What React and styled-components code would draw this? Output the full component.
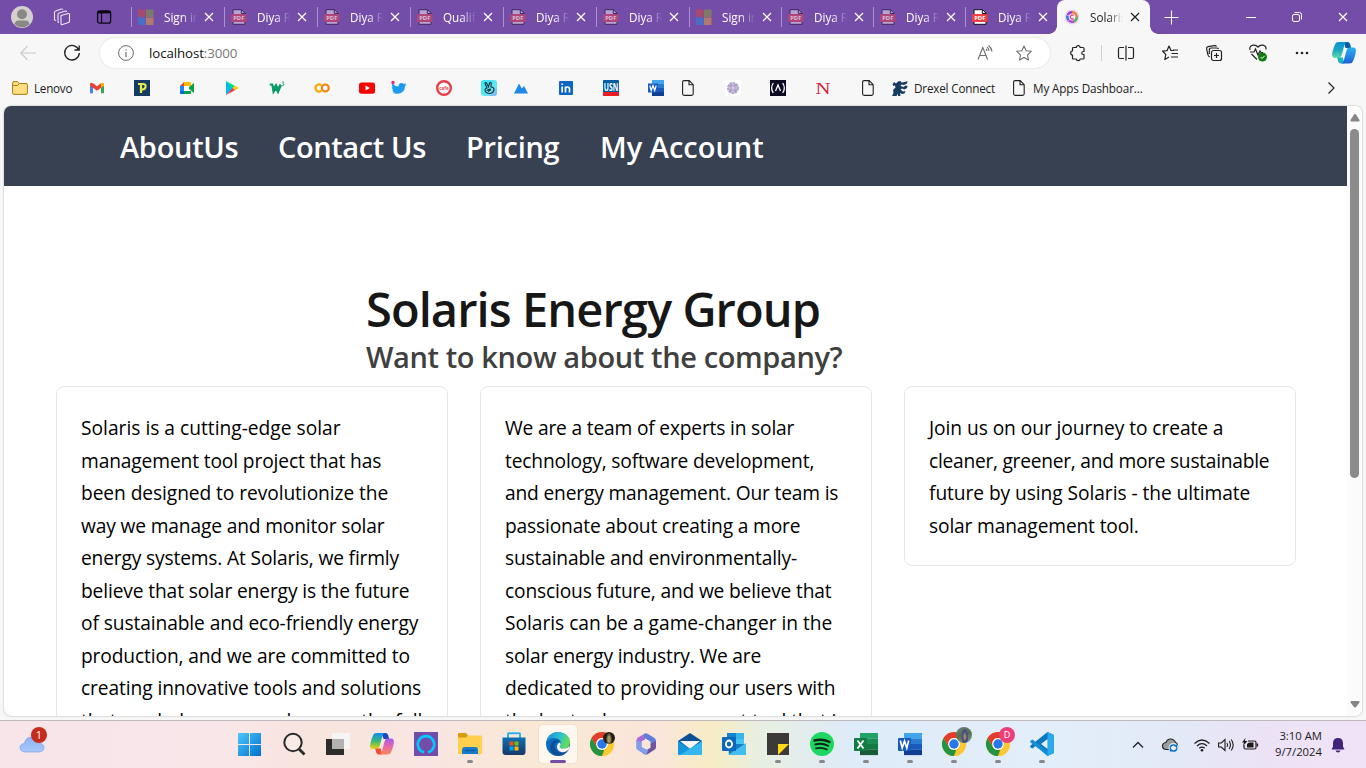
import React from "react";
import styled, { createGlobalStyle, css } from "styled-components";

const GlobalStyle = createGlobalStyle`
  *, *::before, *::after { box-sizing: border-box; }
  body { margin: 0; overflow: hidden; font-family: "Open Sans", "Noto Sans", sans-serif; }
  h1, h2, p { margin: 0; }
`;

/* ---------- layout ---------- */
const Screen = styled.div`
  width: 1366px;
  height: 768px;
  display: flex;
  flex-direction: column;
  background: #f7f7f7;
  overflow: hidden;
`;
const Slot = styled.div`
  width: ${(p) => p.$w}px;
  flex: none;
  height: 100%;
  display: flex;
  align-items: center;
  justify-content: center;
`;
const Icon = styled.svg.attrs({ fill: "none" })`
  width: ${(p) => p.$s || 16}px;
  height: ${(p) => p.$s || 16}px;
  flex: none;
  display: block;
  overflow: visible;
`;

/* ---------- title bar ---------- */
const TitleBar = styled.div`
  height: 34px;
  flex: none;
  display: flex;
  align-items: stretch;
  background: #744da9;
`;
const TabStrip = styled.div`
  display: flex;
  align-items: center;
  flex: none;
  width: 1022px;
  padding-left: 3px;
`;
const TabItem = styled.div`
  flex: none;
  width: ${(p) => p.$w}px;
  height: 20px;
  display: flex;
  align-items: center;
  border-left: 1px solid #ac94cb;
  padding-left: 6px;
  color: #fff;
`;
const ActiveTab = styled.div`
  flex: none;
  position: relative;
  width: 93px;
  height: 34px;
  display: flex;
  align-items: center;
  padding-left: 7px;
  background: #f7f7f7;
  border-radius: 8px 8px 0 0;
  color: #222;
  &::before, &::after {
    content: "";
    position: absolute;
    bottom: 0;
    width: 8px;
    height: 8px;
  }
  &::before { left: -8px; background: radial-gradient(circle at 0 0, transparent 7.5px, #f7f7f7 8px); }
  &::after { right: -8px; background: radial-gradient(circle at 100% 0, transparent 7.5px, #f7f7f7 8px); }
`;
const TabLabel = styled.span`
  width: 33px;
  margin-left: 10px;
  overflow: hidden;
  white-space: nowrap;
  font-size: 11.7px;
  line-height: 18px;
  mask-image: linear-gradient(90deg, #000 55%, transparent 100%);
`;
const TabClose = styled.span`
  display: flex;
  margin-left: 7px;
`;
const Spacer = styled.div` flex: 1; `;

/* ---------- tool bar ---------- */
const ToolBar = styled.div`
  height: 38px;
  flex: none;
  display: flex;
  align-items: center;
`;
const AddressBar = styled.div`
  flex: none;
  width: 950px;
  height: 30px;
  display: flex;
  align-items: center;
  border-radius: 15px;
  background: #fff;
  box-shadow: 0 0 2px rgba(0, 0, 0, 0.16);
  padding-left: 18px;
`;
const Address = styled.span`
  margin-left: 15px;
  font-size: 13.3px;
  letter-spacing: -0.1px;
  color: #111;
  span { color: #767676; }
`;
const Divider = styled.div`
  width: 1px;
  height: 16px;
  margin: 0 1px;
  background: #cfcfcf;
`;

/* ---------- bookmarks ---------- */
const Bookmarks = styled.div`
  height: 34px;
  flex: none;
  display: flex;
  align-items: center;
  padding: 0 28px 2px 12px;
`;
const Bookmark = styled.div`
  display: flex;
  align-items: center;
  margin-right: ${(p) => p.$gap || 29}px;
  width: ${(p) => p.$w || 16}px;
  flex: none;
  gap: 6px;
  font-size: 11.7px;
  letter-spacing: ${(p) => p.$ls || 0}px;
  white-space: nowrap;
  color: #1b1b1b;
`;

/* ---------- web page ---------- */
const Viewport = styled.div`
  width: 1358px;
  height: 610px;
  flex: none;
  margin-left: 4px;
  display: flex;
  background: #fff;
  border-radius: 7px;
  overflow: hidden;
  box-shadow: 0 0 2px rgba(0, 0, 0, 0.35);
`;
const Page = styled.main`
  width: 1343px;
  height: 610px;
  overflow: hidden;
`;
const Nav = styled.nav`
  height: 80px;
  display: flex;
  align-items: center;
  padding: 1px 0 0 116px;
  background: #384152;
  color: #fff;
`;
const NavLink = styled.a`
  width: ${(p) => p.$w}px;
  white-space: nowrap;
  font-size: 29px;
  font-weight: 600;
  letter-spacing: ${(p) => p.$ls}px;
`;
const Hero = styled.header`
  padding: 97px 0 0 362px;
  white-space: nowrap;
`;
const Title = styled.h1`
  font-size: 47px;
  line-height: 52px;
  font-weight: 600;
  letter-spacing: -0.92px;
  color: #171717;
`;
const Subtitle = styled.h2`
  padding-top: 3px;
  font-size: 29px;
  line-height: 38px;
  font-weight: 600;
  letter-spacing: -0.38px;
  color: #404040;
`;
const Cards = styled.section`
  display: flex;
  align-items: flex-start;
  gap: 32px;
  padding: 10px 0 0 52px;
`;
const Card = styled.article`
  width: 392px;
  flex: none;
  border: 1px solid #e5e7eb;
  border-radius: 8px;
  padding: 25px 22px 23px 24px;
`;
const Line = styled.p`
  font-size: 19.2px;
  line-height: 32.5px;
  letter-spacing: ${(p) => p.$ls || 0}px;
  white-space: nowrap;
  color: #000;
`;
const ScrollBar = styled.div`
  width: 15px;
  display: flex;
  flex-direction: column;
  align-items: center;
  justify-content: space-between;
  padding: 8px 0;
  background: #fbfbfb;
`;
const Thumb = styled.div`
  width: 9px;
  height: 349px;
  border-radius: 5px;
  background: #8b8b8b;
  margin: 7px 0 auto;
`;

/* ---------- task bar ---------- */
const TaskBar = styled.footer`
  height: 48px;
  margin-top: 4px;
  flex: none;
  display: flex;
  align-items: center;
  border-top: 1px solid #bdb9bd;
  background: linear-gradient(90deg, #f8e5ea 0, #f9e6e9 220px, #f8e5dd 320px, #f9e5e2 430px, #f9e8d5 530px, #fae6da 660px, #f7ecc4 712px, #e8efe2 760px, #deebf8 850px, #e2effa 1040px, #e3e9f7 1180px, #ece2f6 1260px, #f0e3f7 1366px);
`;
const Weather = styled.div`
  position: relative;
  width: 228px;
  padding: 0 0 1px 20px;
`;
const Badge = styled.span`
  position: absolute;
  left: 31px;
  top: -5px;
  width: 16px;
  height: 16px;
  border-radius: 50%;
  background: #c42b1c;
  color: #fff;
  font-size: 11px;
  line-height: 16px;
  text-align: center;
`;
const Task = styled.div`
  position: relative;
  width: 44px;
  height: 47px;
  padding-bottom: 1px;
  display: flex;
  align-items: center;
  justify-content: center;
  ${(p) => p.$mark && css`
    &::after {
      content: "";
      position: absolute;
      bottom: 5px;
      width: ${p.$active ? 16 : 6}px;
      height: 3px;
      border-radius: 2px;
      background: ${p.$active ? "#744da9" : "#88878b"};
    }
  `}
`;
const Tile = styled.div`
  flex: none;
  width: 38px;
  height: 38px;
  display: flex;
  align-items: center;
  justify-content: center;
  border-radius: 4px;
  background: rgba(255, 253, 250, 0.72);
  box-shadow: 0 0 1px rgba(120, 90, 60, 0.35);
`;
const Avatar = styled.span`
  position: absolute;
  right: ${(p) => p.$r}px;
  top: ${(p) => p.$t}px;
  width: ${(p) => p.$d}px;
  height: ${(p) => p.$d}px;
  border-radius: 50%;
  background: ${(p) => p.$bg};
  color: #fff;
  font-size: 9px;
  line-height: ${(p) => p.$d}px;
  text-align: center;
`;
const Clock = styled.div`
  width: 61px;
  padding-bottom: 1px;
  text-align: right;
  white-space: nowrap;
  font-size: 11.3px;
  line-height: 16px;
  color: #1b1b1b;
`;

/* ---------- icons ---------- */
const Close = ({ c = "#fff" }) => (
  <Icon $s={10} viewBox="0 0 10 10"><path d="M1 1l8 8M9 1L1 9" stroke={c} strokeWidth="1.2" /></Icon>
);
const MsIcon = () => (
  <Icon viewBox="0 0 16 16"><path d="M0 .5h7.5V8H0z" fill="#a9496e" /><path d="M8 .5h7.5V8H8z" fill="#7d7b68" /><path d="M0 8.5h7.5V16H0z" fill="#476fc9" /><path d="M8 8.5h7.5V16H8z" fill="#b07b6b" /></Icon>
);
const PdfIcon = ({ bright }) => (
  <Icon viewBox="0 0 16 16">
    <path d="M2 .7h8.5L14 4.2v11.1H2z" fill={bright ? "#fff" : "#b9a3d5"} stroke={bright ? "#111" : "#3e285c"} />
    <path d="M10.3.5V4.5H14" stroke={bright ? "#111" : "#3e285c"} />
    <rect x="0" y="5" width="15.5" height="8" rx="1" fill={bright ? "#f03e3e" : "#ae4679"} />
    <text x="7.8" y="11.3" fill={bright ? "#fff" : "#d8bfd8"} fontSize="5.8" fontWeight="700" textAnchor="middle" fontFamily="Open Sans">PDF</text>
  </Icon>
);
const SolarisIcon = () => (
  <Icon viewBox="0 0 16 16">
    <circle cx="8" cy="8" r="7.4" fill="#e3d3f0" />
    <circle cx="8" cy="8" r="4" fill="#f8eef8" />
    <path d="M8 3.3a4.7 4.7 0 0 0-4.2 2.7" stroke="#a33fc9" strokeWidth="2.4" />
    <path d="M3.6 6.5a4.7 4.7 0 0 0 1 4.7" stroke="#3f6fe0" strokeWidth="2.4" />
    <path d="M4.8 11.4a4.7 4.7 0 0 0 5.2.9" stroke="#b04bd8" strokeWidth="2.4" />
    <path d="M10 12.3A4.7 4.7 0 0 0 12.7 8" stroke="#58b05a" strokeWidth="2.4" />
    <path d="M12.7 8a4.7 4.7 0 0 0-4.7-4.7" stroke="#ee7a3c" strokeWidth="2.4" />
    <path d="M9.6 6.6A2 2 0 1 0 9.6 9.5" stroke="#d43f7c" strokeWidth="1.2" />
  </Icon>
);
const DocIcon = () => (
  <Icon viewBox="0 0 16 16"><path d="M4.2.6h5l4 4.1v9.1q0 1.6-1.600 1.600H4.200q-1.600 0-1.600-1.600V2.200Q2.600.6 4.200.6zM9 .8v4h4" stroke="#222" strokeWidth="1.1" /></Icon>
);
const WordSmall = () => (
  <Icon viewBox="0 0 16 16"><path d="M4 0h12v4H4z" fill="#41a5ee" /><path d="M4 4h12v4H4z" fill="#2b7cd3" /><path d="M4 8h12v4H4z" fill="#185abd" /><path d="M4 12h12v4H4z" fill="#103f91" /><path d="M0 3.5h10v9H0z" fill="#185abd" /><path d="M1.8 5.5l1.4 5 1.8-5 1.7 5 1.5-5" stroke="#fff" strokeWidth="1.2" /></Icon>
);
const Chrome = ({ size = 24 }) => (
  <Icon $s={size} viewBox="0 0 24 24">
    <circle cx="12" cy="12" r="12" fill="#fbc116" />
    <path d="M1.6 6A12 12 0 0 1 22.4 6H12a6 6 0 0 0-5.4 3.4L6.8 15z" fill="#e33b2e" />
    <path d="M1.6 6l5.2 9A6 6 0 0 0 12 18a6 6 0 0 0 2.3-.5L12 24A12 12 0 0 1 1.6 6z" fill="#229342" />
    <path d="M17.2 15L12 24a12 12 0 0 0 10.4-18H12a6 6 0 0 1 5.2 9z" fill="#fcc934" />
    <circle cx="12" cy="12" r="5.9" fill="#fff" /><circle cx="12" cy="12" r="4.7" fill="#2778ea" />
  </Icon>
);
const OfficeIcon = ({ colors, tile, children }) => (
  <Icon $s={24} viewBox="0 0 24 24">
    {colors.map((c, i) => <rect key={c} x="6" y={1 + i * 5.5} width="18" height="5.6" fill={c} />)}
    <rect x="0" y="6" width="13" height="13" rx="1" fill={tile} />{children}
  </Icon>
);
const CopilotIcon = ({ warm }) => (
  <Icon $s={24} viewBox="0 0 24 24">
    <defs>
      <linearGradient id={warm ? "cw1" : "cb1"} x1="0" y1="0" x2="0" y2="1"><stop stopColor={warm ? "#148cf0" : "#0c8fd8"} /><stop offset=".5" stopColor={warm ? "#35b978" : "#19a8c6"} /><stop offset="1" stopColor={warm ? "#f4d20c" : "#61dda0"} /></linearGradient>
      <linearGradient id={warm ? "cw2" : "cb2"} x1="0" y1="0" x2="0" y2="1"><stop stopColor={warm ? "#a35be8" : "#29b1ee"} /><stop offset=".5" stopColor={warm ? "#e767ac" : "#2688e8"} /><stop offset="1" stopColor={warm ? "#f98a50" : "#1b61d6"} /></linearGradient>
    </defs>
    <path d="M11.5 1h4q2 0 2.6 2l1 4h-5.5z" fill={warm ? "#1748bd" : "#0b5c9d"} />
    <path d="M6.7 1h8.500q-2 .4-2.600 2.300L9.500 14.700q-.7 2.300-3 2.300H3Q0 17 .1 13.600.2 11.400 1.600 7L3 3.400Q3.800 1 6.700 1z" fill={`url(#${warm ? "cw1" : "cb1"})`} />
    <path d="M12.5 22.5H8.800q-2 0-2.600-2l-1-4h5.500z" fill={warm ? "#ef4e35" : "#1bb3c5"} />
    <path d="M17.3 22.5H9q2-.4 2.600-2.300L14.700 9q.7-2.400 3-2.400h3.400q3 0 2.800 3.600-.1 2.200-1.500 6.600L21 20.200Q20.200 22.500 17.300 22.500z" fill={`url(#${warm ? "cw2" : "cb2"})`} />
  </Icon>
);

const tabs = [
  ["ms", "Sign in", 93], ["pdf", "Diya Re", 93], ["pdf", "Diya Re", 93], ["pdf", "Qualific", 93], ["pdf", "Diya Re", 93],
  ["pdf", "Diya Re", 93], ["ms", "Sign in", 92], ["pdf", "Diya Re", 92], ["pdf", "Diya Re", 92], ["hot", "Diya Re", 92],
];

const cards = [
  [
    ["Solaris is a cutting-edge solar", 0], ["management tool project that has", -0.13], ["been designed to revolutionize the", -0.08],
    ["way we manage and monitor solar", -0.15], ["energy systems. At Solaris, we firmly", -0.16], ["believe that solar energy is the future", -0.13],
    ["of sustainable and eco-friendly energy", -0.1], ["production, and we are committed to", -0.13], ["creating innovative tools and solutions", -0.1],
    ["that can help everyone harness the full", -0.17],
  ],
  [
    ["We are a team of experts in solar", -0.18], ["technology, software development,", -0.16], ["and energy management. Our team is", -0.17],
    ["passionate about creating a more", -0.16], ["sustainable and environmentally-", -0.18], ["conscious future, and we believe that", -0.17],
    ["Solaris can be a game-changer in the", -0.03], ["solar energy industry. We are", -0.19], ["dedicated to providing our users with", -0.1],
    ["the best solar management tool that is", -0.15],
  ],
  [
    ["Join us on our journey to create a", -0.07], ["cleaner, greener, and more sustainable", -0.26], ["future by using Solaris - the ultimate", -0.07],
    ["solar management tool.", -0.15],
  ],
];

const Tabs = () => (
  <TitleBar>
    <Slot $w={44}>
      <Icon $s={22} viewBox="0 0 22 22"><circle cx="11" cy="11" r="11" fill="#d3d0cd" /><circle cx="11" cy="8.3" r="5" fill="#8a8886" /><path d="M3.5 18.5Q4 14.6 7.500 14.600h7q3.500 0 4 3.900Q11 24 3.500 18.500z" fill="#8a8886" /></Icon>
    </Slot>
    <Slot $w={36}>
      <Icon $s={18} viewBox="0 0 18 18"><g stroke="#eee6f7" strokeWidth="1.1" strokeLinejoin="round"><path d="M8 7.5l7-2q1.500-.3 1.500 1.200v6.500q0 1-1 1.300l-6 2Q8 17 8 15.500z" /><path d="M6 14.500l-1-.3V6.500Q5 5.300 6 5l6.500-2q1-.2 1 1M3 12.500l-1.500-.5V4.300q0-1 1-1.300L8.500 1q1.200-.2 1.300.8" /></g></Icon>
    </Slot>
    <Slot $w={48}>
      <Icon viewBox="0 0 16 16"><rect x="1.600" y="1.800" width="13" height="12.400" rx="2" stroke="#0b0711" strokeWidth="1.300" /><path d="M1.600 3.200h13" stroke="#0b0711" strokeWidth="2.400" /><path d="M5.500 4v10" stroke="#0b0711" strokeWidth="1.200" /></Icon>
    </Slot>
    <TabStrip>
      {tabs.map(([kind, label, w], i) => (
        <TabItem key={i} $w={w}>
          {kind === "ms" ? <MsIcon /> : <PdfIcon bright={kind === "hot"} />}
          <TabLabel>{label}</TabLabel>
          <TabClose><Close /></TabClose>
        </TabItem>
      ))}
      <ActiveTab>
        <SolarisIcon />
        <TabLabel>Solaris</TabLabel>
        <TabClose><Close c="#222" /></TabClose>
      </ActiveTab>
    </TabStrip>
    <Slot $w={43}><Icon viewBox="0 0 16 16"><path d="M7.500 1.500v14M.5 8.500h14" stroke="#fff" strokeWidth="1.100" /></Icon></Slot>
    <Spacer />
    <Slot $w={30}><Icon $s={10} viewBox="0 0 10 10"><path d="M0 5.500h10" stroke="#fff" /></Icon></Slot>
    <Slot $w={62}><Icon $s={10} viewBox="0 0 10 10"><rect x=".5" y="2.500" width="7" height="7" rx="1.500" stroke="#fff" /><path d="M2.500.5h5q2 0 2 2v5" stroke="#fff" /></Icon></Slot>
    <Slot $w={30}><Close /></Slot>
    <Slot $w={8} />
  </TitleBar>
);

const Tools = () => (
  <ToolBar>
    <Slot $w={56}><Icon viewBox="0 0 16 16"><path d="M16 8H.8M7.500 1L.8 8l6.700 7" stroke="#c9c9c9" strokeWidth="1.100" /></Icon></Slot>
    <Slot $w={32}><Icon viewBox="0 0 16 16"><path d="M14.800 5A7.300 7.300 0 1 0 15.300 8M15.200.5V5h-4.700" stroke="#1f1f1f" strokeWidth="1.300" /></Icon></Slot>
    <Slot $w={12} />
    <AddressBar>
      <Icon viewBox="0 0 16 16"><circle cx="8" cy="8" r="7.400" stroke="#6d6d6d" /><path d="M8 7v5M8 4.200v1.300" stroke="#6d6d6d" strokeWidth="1.200" /></Icon>
      <Address>localhost<span>:3000</span></Address>
      <Spacer />
      <Slot $w={40}><Icon viewBox="0 0 16 16"><path d="M1 14.500L5.800 2.500l4.800 12M2.600 10.500H9M10 2q2 1.500 2 4M11.500.5q3 2 3.500 6M9 4q.8.700.9 2" stroke="#6d6d6d" strokeWidth="1.100" /></Icon></Slot>
      <Slot $w={38}><Icon viewBox="0 0 16 16"><path d="M8 1l2.150 4.700 5.100.600-3.800 3.500 1 5.100L8 12.400l-4.450 2.500 1-5.100L.75 6.300l5.100-.6z" stroke="#6d6d6d" strokeWidth="1.100" strokeLinejoin="round" /></Icon></Slot>
      <Slot $w={7} />
    </AddressBar>
    <Slot $w={6} />
    <Slot $w={44}><Icon viewBox="0 0 16 16"><path d="M3.500 2.500h2.800q0-1.800 1.900-1.800t1.900 1.800H13q1 0 1 1v3h-.8q-1.500.2-1.500 1.500t1.500 1.500h.8v3.500q0 1-1 1h-2.900q0 1.700-1.900 1.700T6.300 14H3.500q-1 0-1-1v-3Q.7 10 .7 8t1.800-2V3.500q0-1 1-1" stroke="#222" strokeWidth="1.200" strokeLinejoin="round" /></Icon></Slot>
    <Divider />
    <Slot $w={45}><Icon viewBox="0 0 16 16"><path d="M6 2.500H2q-1.500 0-1.500 1.500v8q0 1.500 1.500 1.500h4M10 2.500h4q1.500 0 1.500 1.500v8q0 1.500-1.500 1.500h-4M8 .5v15" stroke="#222" strokeWidth="1.200" /></Icon></Slot>
    <Slot $w={44}><Icon viewBox="0 0 16 16"><path d="M12 5.500H9L7 1 5 5.700l-4.500.5 3.300 3.300-1 5L7 12M9.500 8.500H16M9 12h7M11 5h5" stroke="#222" strokeWidth="1.200" strokeLinejoin="round" /></Icon></Slot>
    <Slot $w={44}><Icon viewBox="0 0 16 16"><rect x="5.500" y="5.500" width="10" height="10" rx="2" stroke="#222" strokeWidth="1.200" /><path d="M10.500 8v5M8 10.500h5M3.800 11.800Q2.300 11.500 2 10L.6 3.800Q.3 2 2 1.600L8.500.6q1.500-.2 2 1M3.300 9V5Q3.300 3 5.300 3h5.200q1.500 0 2 1" stroke="#222" strokeWidth="1.200" /></Icon></Slot>
    <Slot $w={44}><Icon $s={18} viewBox="0 0 18 18"><path d="M1 6Q0 2 4 1.200q3-.5 5 1.800 2-2.300 5-1.800 3.500.8 3 4.300M1 8h4l1.500-3 2.500 6 2-4 1 1.500h2M2.500 10L8 15.500" stroke="#222" strokeWidth="1.200" /><circle cx="13.500" cy="13" r="4.500" fill="#107c10" /><path d="M11.500 13l1.500 1.500 2.700-2.700" stroke="#fff" /></Icon></Slot>
    <Slot $w={43}><Icon viewBox="0 0 16 16"><circle cx="3" cy="8" r="1.300" fill="#222" /><circle cx="8" cy="8" r="1.300" fill="#222" /><circle cx="13" cy="8" r="1.300" fill="#222" /></Icon></Slot>
    <Slot $w={42}><CopilotIcon /></Slot>
  </ToolBar>
);

const BookmarkBar = () => (
  <Bookmarks>
    <Bookmark $w={61} $gap={16} $ls={-0.25}>
      <Icon viewBox="0 0 16 16"><path d="M.6 3q0-1.400 1.400-1.400h3.500L7.300 3.500H14q1.400 0 1.400 1.400v8q0 1.500-1.400 1.500H2Q.6 14.400.6 13z" fill="#ffdf82" stroke="#a77c17" /><path d="M.6 5.500h5l1.700-2" stroke="#a77c17" /></Icon>Lenovo
    </Bookmark>
    <Bookmark><Icon viewBox="0 0 16 16"><path d="M1 3.500v9.700h3V6.500z" fill="#4285f4" /><path d="M12 6.500v6.700h3V3.500z" fill="#34a853" /><path d="M1 3.500Q2 2 4 3.300l4 3 4-3Q14 2 15 3.500v2.200l-7 5-7-5z" fill="#ea4335" /><path d="M12 3.300Q14 2 15 3.500v2.200l-3 2.100z" fill="#fbbc04" /></Icon></Bookmark>
    <Bookmark><Icon viewBox="0 0 16 16"><path d="M0 0h16v16H0z" fill="#173a62" /><path d="M4 4h5.500Q12 4.200 11.500 7q-.5 2.300-3 2.500H7M7 4v9" stroke="#e3ee4a" strokeWidth="2.200" /></Icon></Bookmark>
    <Bookmark><Icon viewBox="0 0 16 16"><path d="M1 6l4-4v4z" fill="#ea4335" /><path d="M5 2h6q1 0 1 1v3H5z" fill="#fbbc04" /><path d="M1 6h4v5H1z" fill="#2684fc" /><path d="M1 11h4v3H2q-1 0-1-1z" fill="#0066da" /><path d="M5 11h7v2q0 1-1 1H5zM9 8l6-5v10z" fill="#00a344" /><path d="M5 6h5v5H5z" fill="#fff" /></Icon></Bookmark>
    <Bookmark><Icon viewBox="0 0 16 16"><path d="M2 1v14l7-7z" fill="#00bcf2" /><path d="M2 1l9 5-2.500 2.500z" fill="#00df76" /><path d="M11 5.800L15 8l-4 2.300L8.500 8z" fill="#ffce00" /><path d="M2 15l9-4.800L8.500 8z" fill="#ef3a4f" /></Icon></Bookmark>
    <Bookmark><Icon viewBox="0 0 16 16"><path d="M.7 4.500h2.500l1.500 4.200L7 5l2 4 2.500-4.500M3.200 4.500L4.500 12 7 8l2 4 3-7" stroke="#069b69" strokeWidth="2" /><path d="M13 2h2l-1.200 1.500q1.600.3 1 1.700-.6.900-2 .3" stroke="#1eaa79" strokeWidth=".8" /></Icon></Bookmark>
    <Bookmark><Icon viewBox="0 0 16 16"><path d="M7.300 5.300a3.500 3.500 0 1 0 0 5.400" stroke="#f9ab00" strokeWidth="2.200" /><circle cx="11.300" cy="8" r="3.500" stroke="#f18712" strokeWidth="2.200" /></Icon></Bookmark>
    <Bookmark $gap={16}><Icon viewBox="0 0 16 16"><rect y="2.500" width="16" height="11.300" rx="2.500" fill="#f00" /><path d="M6.500 5.500v5L11 8z" fill="#fff" /></Icon></Bookmark>
    <Bookmark><Icon viewBox="0 0 16 16"><path d="M1 12.500h3Q1.500 11.700 1.300 10h1Q1 9 .7 7l1.200.3Q0 5.500 1.500 3.500q3 3.200 6 3 0-3.500 3-3.500 1.300 0 2.200.9l2.300-.7-1 1.600 1.500-.2-1.500 1.600q-.3 5-3.700 6.600-4.500 1.900-9.300-.3z" fill="#1d9bf0" /><circle cx="2" cy="2.500" r="1.700" fill="#ee2487" /></Icon></Bookmark>
    <Bookmark><Icon viewBox="0 0 16 16"><circle cx="8" cy="8" r="6.800" fill="#fff" stroke="#e63f4b" strokeWidth="2.400" /><text x="8" y="9.500" textAnchor="middle" fontSize="4.500" fontWeight="700" fill="#e63f4b">cafe</text></Icon></Bookmark>
    <Bookmark $gap={16}><Icon viewBox="0 0 16 16"><defs><linearGradient id="hand" x1="0" y1="0" x2="1" y2="1"><stop stopColor="#2be8ff" /><stop offset=".65" stopColor="#65e5f1" /><stop offset="1" stopColor="#82a6ef" /></linearGradient></defs><rect width="16" height="16" rx="3" fill="url(#hand)" /><path d="M6 8L4 3.500Q4 2 5.500 2.800L7.500 7l1-4q1-1.200 1.700 0L10 7q3 0 3 2.700Q12.500 13 9 13.500 4 13.500 4 9.700 4.500 8 6 8zM5.500 10.500L9 9v2M7 11.500l3-2" stroke="#14313a" strokeWidth="1.100" /></Icon></Bookmark>
    <Bookmark><Icon viewBox="0 0 16 16"><path d="M1 13.500L6 3.500l2.800 5L11 6l4 7.500z" fill="#1d88e8" /></Icon></Bookmark>
    <Bookmark><Icon viewBox="0 0 16 16"><rect x="1" y="1" width="14" height="14" rx="1" fill="#0a66c2" /><path d="M4.200 6.500v6M4.200 3.500v1.600M7.500 12.500v-6M7.500 9q0-2 2-2t2 2v3.500" stroke="#fff" strokeWidth="1.700" /></Icon></Bookmark>
    <Bookmark><Icon viewBox="0 0 16 16"><rect width="16" height="16" rx="1" fill="#005ea6" /><path d="M0 12h16v3q0 1-1 1H1q-1 0-1-1z" fill="#ed1c24" /><text x="8" y="11" textAnchor="middle" fontSize="11" fontWeight="700" fill="#fff" textLength="14.500" lengthAdjust="spacingAndGlyphs">USN</text></Icon></Bookmark>
    <Bookmark $gap={16}><WordSmall /></Bookmark>
    <Bookmark><DocIcon /></Bookmark>
    <Bookmark><Icon viewBox="0 0 16 16"><path d="M0 0h16v16H0z" fill="#fff" /><circle cx="8" cy="8" r="4.800" fill="#d9d0e6" stroke="#b4a5cc" strokeWidth="2.400" strokeDasharray="2.600 .5" /><path d="M4 6h8M4 10h8M6 4v8M10 4v8" stroke="#a794c4" /></Icon></Bookmark>
    <Bookmark><Icon viewBox="0 0 16 16"><path d="M0 0h16v16H0z" fill="#0a0a23" /><path d="M3.300 3Q0 8 3.300 13M12.700 3q3.300 5 0 10M5.500 11L8 5l2.500 6" stroke="#fff" strokeWidth="1.300" /></Icon></Bookmark>
    <Bookmark><Icon viewBox="0 0 16 16"><text x="8" y="13.500" textAnchor="middle" fontFamily="Liberation Serif" fontSize="17.500" textLength="15" lengthAdjust="spacingAndGlyphs" fill="#d6203a">N</text></Icon></Bookmark>
    <Bookmark $gap={16}><DocIcon /></Bookmark>
    <Bookmark $w={103} $gap={16} $ls={-0.18}><Icon viewBox="0 0 16 16"><path d="M.5 4.500L2 2l2 1.500L6 1.500 8.500 1l1 1.500L13 2l2.500-1-.5 2.500L12 5 9.500 4.500 8.500 6l3 1 2-1.500 2 .5-.5 2-2.500 1.500L10 8.500 8.500 9.500l2.500 2 2.500-.5-1 2.500-2.500.5L8 13l.5 3H6v-2.500L4.500 16H0l1.500-3L1 10l2.500-2.500-.5-2L1.500 6z" fill="#183b62" /></Icon>Drexel Connect</Bookmark>
    <Bookmark $w={132} $ls={-0.13}><DocIcon />My Apps Dashboar...</Bookmark>
    <Spacer />
    <Icon $s={14} viewBox="0 0 14 14"><path d="M4.500 1.500L10 7l-5.500 5.500" stroke="#222" strokeWidth="1.200" /></Icon>
  </Bookmarks>
);

const Taskbar = () => (
  <TaskBar>
    <Weather>
      <Icon $s={24} viewBox="0 0 24 24"><defs><linearGradient id="cloud" x1="0" y1="0" x2="0" y2="1"><stop stopColor="#8db4f3" /><stop offset="1" stopColor="#a6c8fa" /></linearGradient></defs><path d="M5 20Q0 19.500 0 15.500 0 12 4.500 11.500 5.500 5 11.500 5t7.500 6q5 .5 5 4.500 0 4-5 4.500z" fill="url(#cloud)" stroke="#6f9be8" strokeWidth=".6" /></Icon>
      <Badge>1</Badge>
    </Weather>
    <Task><Icon $s={24} viewBox="0 0 24 24"><defs><linearGradient id="win" x1="0" y1="0" x2="1" y2="1"><stop stopColor="#4cc8fb" /><stop offset="1" stopColor="#006fd1" /></linearGradient></defs><path d="M0 1h11v11H0zM12 1h11v11H12zM0 13h11v11H0zM12 13h11v11H12z" fill="url(#win)" /></Icon></Task>
    <Task><Icon $s={24} viewBox="0 0 24 24"><circle cx="11" cy="10.500" r="8.700" stroke="#2b2b2b" strokeWidth="2" fill="rgba(255,255,255,.2)" /><path d="M17 17l5.500 5.500" stroke="#2b2b2b" strokeWidth="2.800" /></Icon></Task>
    <Task><Icon $s={24} viewBox="0 0 24 24"><path d="M0 7h18v16H0z" fill="#2c2c2b" /><path d="M6 1h18v16H6z" fill="#f5f5f4" /><path d="M6 7h12v10H6z" fill="#b3b2b0" /></Icon></Task>
    <Task><CopilotIcon warm /></Task>
    <Task><Icon $s={24} viewBox="0 0 24 24"><path d="M0 0h24v24H0z" fill="#744da9" /><path d="M10 20.300A8.200 8.200 0 1 1 14 20.300" stroke="#00caff" strokeWidth="2.600" /></Icon></Task>
    <Task $mark><Icon $s={24} viewBox="0 0 24 24"><path d="M0 2q0-1 1-1h7l2 2.500V6H0z" fill="#d99b0b" /><path d="M0 5.500h8l2-2h13q1 0 1 1V22H0z" fill="#ffd04c" /><path d="M4 22v-4q0-3 3-3h10q3 0 3 3v4z" fill="#1879c8" /><path d="M7 18.500h10" stroke="#0b5ea4" strokeWidth="1.500" /></Icon></Task>
    <Task><Icon $s={24} viewBox="0 0 24 24"><defs><linearGradient id="store" x1="0" y1="0" x2="0" y2="1"><stop stopColor="#0f6fb5" /><stop offset="1" stopColor="#153868" /></linearGradient></defs><path d="M6 6V2q0-.7.7-.7h10.600q.7 0 .7.7v4" stroke="#2cb3ec" strokeWidth="2" /><path d="M.5 5.500h23V20q0 3-3 3h-17q-3 0-3-3z" fill="url(#store)" /><path d="M7.500 9.500h4v4h-4z" fill="#f25022" /><path d="M12.500 9.500h4v4h-4z" fill="#7fba00" /><path d="M7.500 14.500h4v4h-4z" fill="#00a4ef" /><path d="M12.500 14.500h4v4h-4z" fill="#ffb900" /></Icon></Task>
    <Task $mark $active><Tile><Icon $s={24} viewBox="0 0 24 24"><defs><linearGradient id="edge" x1="0" y1="0" x2="1" y2=".3"><stop stopColor="#1489d8" /><stop offset=".6" stopColor="#2bc3d2" /><stop offset="1" stopColor="#66dd55" /></linearGradient></defs><circle cx="12" cy="12" r="12" fill="#0f6cbd" /><path d="M.2 10.500Q2 0 12 0q11 .5 12 9.500.2 6.500-6.500 7-4.500 0-4-2.500 2-1.500 1.200-4Q13.500 6 8 6 2.500 6.200.2 10.500z" fill="url(#edge)" /><path d="M8.500 13Q8 20 15 20.500q4.500 0 7.500-2.700Q18.500 24 12 24 4.500 23 4 16q0-5 5-8 3-.5 5 1.500-5 0-5.500 3.500z" fill="#104e98" /><path d="M13.700 14q-.7 2.500 3.800 2.600 4 0 6.300-2.600l-1.300 3.800Q19.500 21 15 20 10.500 18 11 14q.3-2.800 3-3.500 1.500 2-.3 3.500z" fill="#fdf6ee" /></Icon></Tile></Task>
    <Task><Chrome /><Avatar $r={9} $t={11} $d={12} $bg="radial-gradient(ellipse 25% 55% at 50% 60%, #a99764 0 40%, #231f12 100%)" /></Task>
    <Task><Icon $s={22} viewBox="0 0 22 22"><path d="M1.500 7Q1.500 5.500 3 4.500L10 .5v6L6.500 8.500v6L1.500 16z" fill="#a76bd9" /><path d="M9 1q2-1.300 4 0l6.500 4Q21 6 21 8v6l-5.500-3V8.500L9.500 5z" fill="#5d7fd8" /><path d="M21 8v6.500q0 1.500-2 2.500l-6 4q-2 1-4 0L7 19.700l8.500-4.900V11z" fill="#71549e" /><path d="M1.500 7v8q0 1.500 1.500 2.300l6 3.700q2 .8 3-.5l1-3.500-6.500-3v-5z" fill="#7f9fe9" /><path d="M11 6.500l4 2.300v5L11 16l-4-2.200v-5z" fill="#f9e6d9" /></Icon></Task>
    <Task><Icon $s={24} viewBox="0 0 24 24"><path d="M0 9L12 1l12 8v13H0z" fill="#0b4f94" /><path d="M2 9h20l-10 8z" fill="#f6f7f8" /><path d="M0 9l14 9-9 5H1q-1 0-1-1z" fill="#1597dc" /><path d="M24 9v13q0 1-1 1H2z" fill="#35b8f2" /></Icon></Task>
    <Task><Icon $s={24} viewBox="0 0 24 24"><path d="M5 1h17v13H5z" fill="#1583cb" /><path d="M14 1h8v6h-8z" fill="#38b4ea" /><path d="M14 7h8v6h-8z" fill="#46c5f4" /><path d="M6 12h18v10q0 1-1 1H7z" fill="#177cc4" /><path d="M6 23l18-12v11q0 1-1 1z" fill="#44bdf0" /><rect y="5" width="14" height="14" rx="1" fill="#0b68bd" /><ellipse cx="7" cy="12" rx="3.100" ry="3.500" stroke="#fff" strokeWidth="1.800" /></Icon></Task>
    <Task $mark><Icon $s={24} viewBox="0 0 24 24"><path d="M1 1h22v22H1z" fill="#3b3a39" /><path d="M12 12h11L12 23z" fill="#ffd916" /></Icon></Task>
    <Task $mark><Icon $s={24} viewBox="0 0 24 24"><circle cx="12" cy="12" r="12" fill="#1ed760" /><path d="M4.500 8.500q8-2.200 15 1.500" stroke="#0c2414" strokeWidth="2.500" strokeLinecap="round" /><path d="M5.300 12.500q7-1.800 12.800 1.300" stroke="#0c2414" strokeWidth="2" strokeLinecap="round" /><path d="M6 16.300q6-1.300 10.800 1.200" stroke="#0c2414" strokeWidth="1.700" strokeLinecap="round" /></Icon></Task>
    <Task $mark><OfficeIcon colors={["#21a366", "#1b8c52", "#107c41", "#185c37"]} tile="#107c41"><path d="M3.500 8.500l6 8M9.500 8.500l-6 8" stroke="#fff" strokeWidth="1.900" /></OfficeIcon></Task>
    <Task $mark><OfficeIcon colors={["#41a5ee", "#2b7cd3", "#185abd", "#103f91"]} tile="#185abd"><path d="M2.300 8.500l1.900 7.500L6.500 9l2.300 7 1.900-7.500" stroke="#fff" strokeWidth="1.700" /></OfficeIcon></Task>
    <Task $mark><Chrome /><Avatar $r={4} $t={6} $d={16} $bg="radial-gradient(ellipse 22% 50% at 55% 60%, #a58478 0 20%, #46527c 60% 90%, transparent), linear-gradient(160deg, #6f7d86, #56704a 50%, #8a9aa5)" /></Task>
    <Task $mark><Chrome /><Avatar $r={5} $t={6} $d={16} $bg="#ec407a">D</Avatar></Task>
    <Task $mark><Icon $s={24} viewBox="0 0 24 24"><path d="M17.500 0L24 3v18l-6.500 3L6 13.500 2.500 16.500.3 15.300v-1.500L17.500 0z" fill="#0878bf" /><path d="M.3 8.700l2.200-1.200L18 19.500V24L.3 10.300z" fill="#168dd5" /><path d="M17.500 0L24 3v18l-6.500 3z" fill="#2aa8ef" /><path d="M17.500 7v10L11 12z" fill="#e2effa" /></Icon></Task>
    <Spacer />
    <Slot $w={24}><Icon $s={12} viewBox="0 0 12 12"><path d="M1 8.500l5-5 5 5" stroke="#222" strokeWidth="1.300" /></Icon></Slot>
    <Slot $w={40}><Icon viewBox="0 0 16 16"><path d="M3.500 12.500Q.5 12 .5 9T4 5.500Q5 2 8.500 2t5 3.500q1.500 0 2 2.500v3l-5 1.500z" fill="#9d9d9d" stroke="#252525" strokeWidth="1.200" /><circle cx="11.500" cy="11" r="5" fill="#e8eef8" /><path d="M8 10.500q1-3 4-2.500 1.500.3 2.500 1.800V7.500M15 11.500q-1 3-4 2.500-1.500-.3-2.500-1.800v2.300" stroke="#0873c4" strokeWidth="1.500" /></Icon></Slot>
    <Slot $w={24}><Icon viewBox="0 0 16 16"><path d="M.5 6.500q7.500-7 15 0M3 9q5-4.600 10 0M5.300 11.300q2.700-2.400 5.400 0" stroke="#1b1b1b" strokeWidth="1.200" /><circle cx="8" cy="13.200" r="1.300" fill="#1b1b1b" /></Icon></Slot>
    <Slot $w={24}><Icon viewBox="0 0 16 16"><path d="M.6 6h2.700L7 2.500v11L3.300 10H.6zM9 6q1.300 2 0 4M11.200 4q2.500 4 0 8M13.200 2.500q4 5.500 0 11" stroke="#1b1b1b" strokeWidth="1.100" /></Icon></Slot>
    <Slot $w={23}><Icon viewBox="0 0 16 16"><path d="M6 4h6.500q1.500 0 1.500 1.500v5q0 1.500-1.500 1.500H3.500Q2 12 2 10.500V8M15.500 6.500v3" stroke="#1b1b1b" strokeWidth="1.200" /><path d="M5 7l2-1.500h4.500v5H5z" fill="#1b1b1b" /><path d="M3.500 1L0 5.500h2L1 9l4.500-5H3z" fill="#1b1b1b" /></Icon></Slot>
    <Clock>3:10 AM<br />9/7/2024</Clock>
    <Slot $w={31}><Icon viewBox="0 0 16 16"><path d="M1.500 12.500L3 9.500V6Q3.300 1 8 1t5 5v3.500l1.500 3zM5.500 13.500h5Q10 15.500 8 15.500t-2.500-2z" fill="#40237a" /></Icon></Slot>
    <Slot $w={13} />
  </TaskBar>
);

export default function App() {
  return (
    <Screen>
      <GlobalStyle />
      <Tabs />
      <Tools />
      <BookmarkBar />
      <Viewport>
        <Page>
          <Nav>
            <NavLink $w={158} $ls={-0.3}>AboutUs</NavLink>
            <NavLink $w={188} $ls={-0.4}>Contact Us</NavLink>
            <NavLink $w={134} $ls={-0.3}>Pricing</NavLink>
            <NavLink $w={164} $ls={0}>My Account</NavLink>
          </Nav>
          <Hero>
            <Title>Solaris Energy Group</Title>
            <Subtitle>Want to know about the company?</Subtitle>
          </Hero>
          <Cards>
            {cards.map((lines, i) => (
              <Card key={i}>{lines.map(([t, ls]) => <Line key={t} $ls={ls}>{t}</Line>)}</Card>
            ))}
          </Cards>
        </Page>
        <ScrollBar>
          <Icon $s={8} viewBox="0 0 8 8"><path d="M4 0q.6 0 1 .6L8.500 6q.5 1.500-1 1.500h-7Q-1 7.500-.5 6L3 .6Q3.400 0 4 0z" fill="#858585" /></Icon>
          <Thumb />
          <Icon $s={8} viewBox="0 0 8 8"><path d="M4 7.500q.6 0 1-.6L8.500 2.500Q9 1 7.500 1h-7Q-1 1-.5 2.500L3 6.900q.4.600 1 .6z" fill="#858585" /></Icon>
        </ScrollBar>
      </Viewport>
      <Taskbar />
    </Screen>
  );
}
